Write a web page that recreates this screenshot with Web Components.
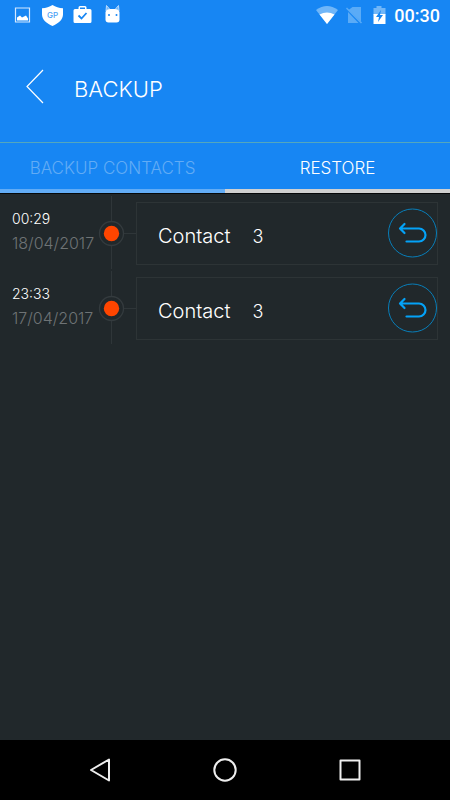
<!DOCTYPE html>
<html lang="en">
<head>
<meta charset="utf-8">
<meta name="viewport" content="width=device-width">
<title>Backup</title>
<style>
html{height:100%}
body{margin:0;min-height:100%;display:flex;flex-direction:column;background:#21282b;color:#fff;font-family:Inter,"Open Sans",sans-serif;font-weight:300}
backup-list{flex:1}
</style>
</head>
<body>
<status-bar></status-bar>
<app-header>BACKUP</app-header>
<tab-bar><tab-item>BACKUP CONTACTS</tab-item><tab-item selected>RESTORE</tab-item></tab-bar>
<backup-list>
<backup-entry time="00:29" date="18/04/2017" count="3">Contact</backup-entry>
<backup-entry time="23:33" date="17/04/2017" count="3">Contact</backup-entry>
</backup-list>
<nav-bar></nav-bar>
<script>
const define = (name, html, setup) => customElements.define(name, class extends HTMLElement {
  constructor() {
    super();
    const t = document.createElement('template');
    t.innerHTML = html;
    this.attachShadow({mode: 'open'}).append(t.content.cloneNode(true));
  }
  connectedCallback() { if (setup) setup(this, this.shadowRoot); }
});

define('status-bar', `
<style>
:host{display:flex;justify-content:space-between;align-items:center;height:32px;padding:0 10px 0 12px;background:#1786f3;font:500 18px/32px Roboto,sans-serif}
div{display:flex;align-items:center}
svg{display:block}
</style>
<div>
<svg width="112" height="32" viewBox="12 0 112 32" fill="#fff">
<path d="M15.500 8h14v14h-14z" fill="none" stroke="#d3e8ff" stroke-width="1.200"/>
<path d="M17 20.500v-3l3-2 2 2 4-2 2 3v2z"/>
<path d="M52.500 5c3 2 6.500 3 10.500 3.200v6.300c0 5-4.500 9-10.500 11.500C46.500 23.500 42 19.500 42 14.500V8.200C46 8 49.500 7 52.500 5z"/>
<text x="47" y="18" font-family="Inter,sans-serif" font-size="8" font-weight="500" fill="#4b9ff4">GP</text>
<path fill-rule="evenodd" d="M75 9h3.500V7.500q0-1.500 1.500-1.500h5q1.500 0 1.500 1.500V9H90q1.500 0 1.500 1.500v11q0 1.500-1.500 1.500H75q-1.500 0-1.500-1.500v-11Q73.500 9 75 9zm5 0h5V7.500h-5z"/>
<path d="M78.500 15.500l3 3 5-5.500" fill="none" stroke="#1786f3" stroke-width="1.800"/>
<path d="M106 11l.5-5.500 3 3.500M119 11l-.5-5.500-3 3.500" fill="#70b6f8" stroke="#b9dbff"/>
<path d="M105.500 12q1-3 4.500-3h5q3.500 0 4.500 3v7.500q0 3-3 3h-8q-3 0-3-3z"/>
<circle cx="109" cy="15" r="1" fill="#1786f3"/><circle cx="116.500" cy="15" r="1" fill="#1786f3"/>
</svg>
</div>
<div>
<svg width="79" height="32" viewBox="316 0 79 32">
<path d="M317 10q11-8 22 0l-11 14z" fill="#70b6f8"/>
<path d="M320.500 14.500q7.500-4 15 0L328 24z" fill="#fff"/>
<path d="M353.500 7H362v14.500L349.500 10zM349 12l10.500 11H349z" fill="#5aabf7"/>
<path d="M347.500 8l15 15" stroke="#5aabf7" stroke-width="1.500"/>
<path d="M374.500 8h3V6h5v2h4v7h-12z" fill="#70b6f8"/>
<path d="M374.500 14h12v10h-12z" fill="#fff"/>
<path d="M382 10l-5 7h3l-1 5 5-7h-3z" fill="#1786f3"/>
</svg>
<span>00:30</span>
</div>`);

define('app-header', `
<style>
:host{display:flex;align-items:center;height:110px;padding-left:24px;background:#1786f3;border-bottom:1px solid #54a7bd}
button{padding:0;border:0;background:none;color:inherit;width:24px;height:40px}
svg{display:block}
h1{margin:0 0 0 26px;padding-top:3px;font-size:22px;line-height:32px;font-weight:300}
</style>
<button aria-label="Back"><svg width="24" height="40" fill="none" stroke="#fff" stroke-width="1.200"><path d="M19 3L3 19.500 19 36"/></svg></button>
<h1><slot></slot></h1>`);

define('tab-bar', `
<style>:host{display:flex;background:#1786f3;border-bottom:1px solid #050708}::slotted(*){flex:1}</style>
<slot></slot>`);

define('tab-item', `
<style>
:host{display:block}
button{display:block;width:100%;height:50px;padding:3px 0 0;border:0;border-bottom:4px solid #62acf5;background:none;font:inherit;font-size:17px;color:#62acf5}
:host([selected]) button{color:#fff;border-color:#d0d0d0}
</style>
<button role="tab"><slot></slot></button>`, (el, root) => {
  root.querySelector('button').setAttribute('aria-selected', el.hasAttribute('selected'));
});

define('backup-list', `
<style>:host{display:flex;flex-direction:column;gap:2px;padding-top:2px}</style>
<slot></slot>`);

define('backup-entry', `
<style>
:host{display:grid;grid-template-columns:87px 49px 1fr;align-items:center;height:73px;padding-right:12px}
.when{box-sizing:border-box;padding:0 0 3px 12px;line-height:25px;white-space:nowrap}
.when time{display:block}
.time{font-size:14px}
.date{font-size:16px;color:#6e7375}
.mark{display:block;width:100%;height:73px}
.card{box-sizing:border-box;height:63px;margin-top:1px;border:1px solid #2d3436;display:flex;align-items:center;padding-left:21px;font-size:20px}
.label,.count{padding-top:6px}
.count{margin-left:22px;flex:1;font-size:18px}
button{width:49px;height:50px;padding:0;border:0;background:none}
svg{display:block}
</style>
<div class="when"><time class="time"></time><time class="date"></time></div>
<svg class="mark" viewBox="0 0 49 73" fill="none" stroke="#2f3639"><path d="M24.500 0v25M24.500 50v23M37 37.500h12"/><circle cx="24.500" cy="37.500" r="12" stroke="#343b3e" stroke-width="1.300"/><circle cx="24.500" cy="37.500" r="7.700" fill="#ff4500" stroke="none"/></svg>
<div class="card"><span class="label"><slot></slot></span><span class="count"></span>
<button aria-label="Restore"><svg width="49" height="50" fill="none" stroke="#04a2f7"><circle cx="24.500" cy="25" r="24" stroke="#087eb9"/><path d="M16.500 16L12 20.500l4.500 4.500M12.500 20.500h18.500a6.500 6.500 0 0 1 0 13H18.500" stroke-width="2.200" stroke-linecap="round" stroke-linejoin="round"/></svg></button></div>`, (el, root) => {
  for (const k of ['time', 'date', 'count']) root.querySelector('.' + k).textContent = el.getAttribute(k);
});

define('nav-bar', `
<style>
:host{display:flex;justify-content:center;gap:101px;align-items:center;height:60px;background:#000}
button{width:24px;height:26px;padding:0;border:0;background:none}
svg{display:block;fill:none;stroke:#eee;stroke-width:2;stroke-linejoin:round}
</style>
<button aria-label="Back"><svg width="24" height="26"><path d="M21 2.500v21L3 13z"/></svg></button>
<button aria-label="Home"><svg width="24" height="26"><circle cx="12" cy="13" r="10.700"/></svg></button>
<button aria-label="Recent apps"><svg width="24" height="26"><path d="M2.500 3.500h19v19h-19z"/></svg></button>`);
</script>
</body>
</html>
